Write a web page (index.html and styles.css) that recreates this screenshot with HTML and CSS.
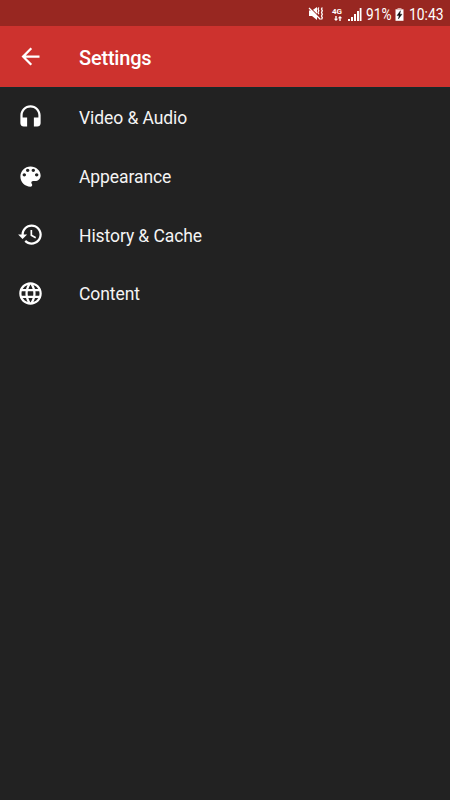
FILE: index.html
```html
<!DOCTYPE html>
<html lang="en">
<head>
  <meta charset="UTF-8" />
  <meta name="viewport" content="width=device-width, initial-scale=1.0" />
  <title>Settings</title>
  <link rel="stylesheet" href="styles.css">
</head>
<body>
  <div class="status-bar">
    <svg class="mute" width="16" height="16" viewBox="0 0 16 16">
      <path d="M1 4.500h3l5-3.500v13l-5-4H1z" fill="#fff"/>
      <path d="M1.500 1.200l12 12" stroke="#982721" stroke-width="1.2"/>
      <path d="M1 2l11.500 11.500" stroke="#fff" stroke-width="1.3"/>
      <path d="M10.800 1.500l-.8 1.500.8 1.700-.8 1.800.8 1.700M14.300 1.500l-.8 1.500.8 1.700-.8 1.800.8 1.700-.8 1.800.8 1.700-.8 1.800" fill="none" stroke="#fff" stroke-width="1.3"/>
    </svg>
    <div class="network">
      <span>4G</span>
      <svg width="9" height="5" viewBox="0 0 9 5">
        <path d="M3 5L.8 2.700h1.500V0h1.400v2.700h1.500zM7 0L4.800 2.300h1.500V5h1.400V2.300h1.500z" fill="#fff"/>
      </svg>
    </div>
    <svg class="signal" width="14" height="13" viewBox="0 0 14 13">
      <path d="M0 11h2v2H0zM3 9h2v4H3zM6 6h2v7H6zM9 3h2v10H9zM11.700 0h1.800v13h-1.800z" fill="#fff"/>
    </svg>
    <span class="percent">91%</span>
    <svg class="battery" width="9" height="13" viewBox="0 0 9 13">
      <path d="M2.500 0h4v1H2.500z" fill="#d9a9a6"/>
      <path d="M.5 1.300h8v11.500h-8z" fill="#fff"/>
      <path d="M5.500 2.700L2 7.500h2.100L3.400 11 7 6.200H4.900z" fill="#111" stroke="#111" stroke-width=".4"/>
    </svg>
    <span class="clock">10:43</span>
  </div>

  <header class="toolbar">
    <svg class="icon" viewBox="0 0 24 24"><path d="M20 11H7.830l5.590-5.590L12 4l-8 8 8 8 1.410-1.410L7.830 13H20v-2z"/></svg>
    <h1>Settings</h1>
  </header>

  <ul class="settings">
    <li>
      <svg class="icon" viewBox="0 0 24 24"><path d="M12 1c-4.970 0-9 4.030-9 9v7c0 1.660 1.340 3 3 3h3v-8H5v-2c0-3.870 3.130-7 7-7s7 3.130 7 7v2h-4v8h3c1.660 0 3-1.340 3-3v-7c0-4.970-4.030-9-9-9z"/></svg>
      <span>Video &amp; Audio</span>
    </li>
    <li>
      <svg class="icon" viewBox="0 0 24 24"><path d="M12 3c-4.970 0-9 4.030-9 9s4.030 9 9 9c.83 0 1.500-.67 1.500-1.500 0-.39-.15-.74-.39-1.010-.23-.26-.38-.61-.38-.99 0-.83.67-1.500 1.500-1.500H16c2.760 0 5-2.240 5-5 0-4.420-4.030-8-9-8zm-5.500 9c-.83 0-1.500-.67-1.500-1.500S5.670 9 6.500 9 8 9.670 8 10.500 7.330 12 6.500 12zm3-4C8.670 8 8 7.330 8 6.500S8.670 5 9.500 5s1.500.67 1.500 1.500S10.330 8 9.500 8zm5 0c-.83 0-1.500-.67-1.500-1.500S13.670 5 14.500 5s1.500.67 1.500 1.500S15.330 8 14.500 8zm3 4c-.83 0-1.500-.67-1.500-1.500S16.670 9 17.500 9s1.500.67 1.500 1.500-.67 1.500-1.500 1.500z"/></svg>
      <span>Appearance</span>
    </li>
    <li>
      <svg class="icon" viewBox="0 0 24 24"><path d="M13 3c-4.970 0-9 4.030-9 9H1l3.890 3.890.07.14L9 12H6c0-3.870 3.130-7 7-7s7 3.130 7 7-3.130 7-7 7c-1.930 0-3.680-.79-4.940-2.060l-1.420 1.420C8.270 19.990 10.510 21 13 21c4.970 0 9-4.030 9-9s-4.030-9-9-9zm-1 5v5l4.280 2.540.72-1.210-3.500-2.080V8H12z"/></svg>
      <span>History &amp; Cache</span>
    </li>
    <li>
      <svg class="icon" viewBox="0 0 24 24"><path d="M11.990 2C6.470 2 2 6.480 2 12s4.470 10 9.990 10C17.520 22 22 17.520 22 12S17.520 2 11.990 2zm6.930 6h-2.950c-.32-1.250-.78-2.450-1.380-3.560 1.840.63 3.370 1.910 4.330 3.560zM12 4.040c.83 1.200 1.480 2.530 1.910 3.960h-3.820c.43-1.430 1.080-2.760 1.910-3.960zM4.260 14C4.100 13.360 4 12.690 4 12s.1-1.360.26-2h3.380c-.08.66-.14 1.320-.14 2s.06 1.340.14 2H4.260zm.82 2h2.950c.32 1.250.78 2.450 1.380 3.560-1.840-.63-3.370-1.900-4.330-3.560zm2.950-8H5.080c.96-1.660 2.490-2.930 4.330-3.560C8.810 5.550 8.350 6.750 8.030 8zM12 19.960c-.83-1.200-1.480-2.530-1.910-3.960h3.820c-.43 1.430-1.080 2.760-1.910 3.960zM14.340 14H9.660c-.09-.66-.16-1.320-.16-2s.07-1.350.16-2h4.680c.09.65.16 1.320.16 2s-.07 1.340-.16 2zm.25 5.560c.6-1.110 1.060-2.310 1.380-3.560h2.950c-.96 1.650-2.490 2.930-4.330 3.560zM16.360 14c.08-.66.14-1.320.14-2s-.06-1.340-.14-2h3.380c.16.64.26 1.310.26 2s-.1 1.360-.26 2h-3.380z"/></svg>
      <span>Content</span>
    </li>
  </ul>
</body>
</html>
```

FILE: styles.css
```css
* {
  box-sizing: border-box;
  margin: 0;
  padding: 0;
}

body {
  background-color: #222;
  color: #f4f4f4;
  font-family: Roboto, sans-serif;
  min-height: 100vh;
  overflow: hidden;
}

.status-bar {
  display: flex;
  align-items: center;
  justify-content: flex-end;
  height: 26px;
  padding: 2px 5px 0 0;
  background: #982721;
  color: #fff;
  font-size: 16.5px;
  line-height: 24px;
}

.status-bar svg {
  display: block;
}

.mute {
  margin-right: 7px;
}

.network {
  display: flex;
  flex-direction: column;
  align-items: center;
  width: 12px;
  margin-right: 5px;
  font-size: 8px;
  font-weight: 700;
  line-height: 8px;
}

.signal {
  margin-right: 4px;
}

/* narrow digits, like the phone's status font */
.percent,
.clock {
  padding-top: 1px;
  transform-origin: left;
}

.percent {
  width: 27px;
  transform: scaleX(0.83);
}

.battery {
  margin: 0 5px 0 2px;
}

.clock {
  width: 36px;
  transform: scaleX(0.84);
}

.toolbar {
  display: flex;
  align-items: center;
  height: 62px;
  padding-left: 17px;
  background: #cd322e;
  border-bottom: 1px solid #15292b;
  color: #fff;
}

.icon {
  flex: none;
  width: 27px;
  height: 27px;
  margin-right: 35px;
  fill: #fff;
}

h1 {
  padding-top: 3px;
  font-size: 20px;
  font-weight: 500;
  letter-spacing: -0.2px;
}

.settings {
  list-style: none;
}

.settings li {
  display: flex;
  align-items: center;
  height: 58.7px;
  padding-left: 17px;
  font-size: 17.5px;
  letter-spacing: -0.08px;
}

.settings span {
  padding-top: 2px;
}
```
